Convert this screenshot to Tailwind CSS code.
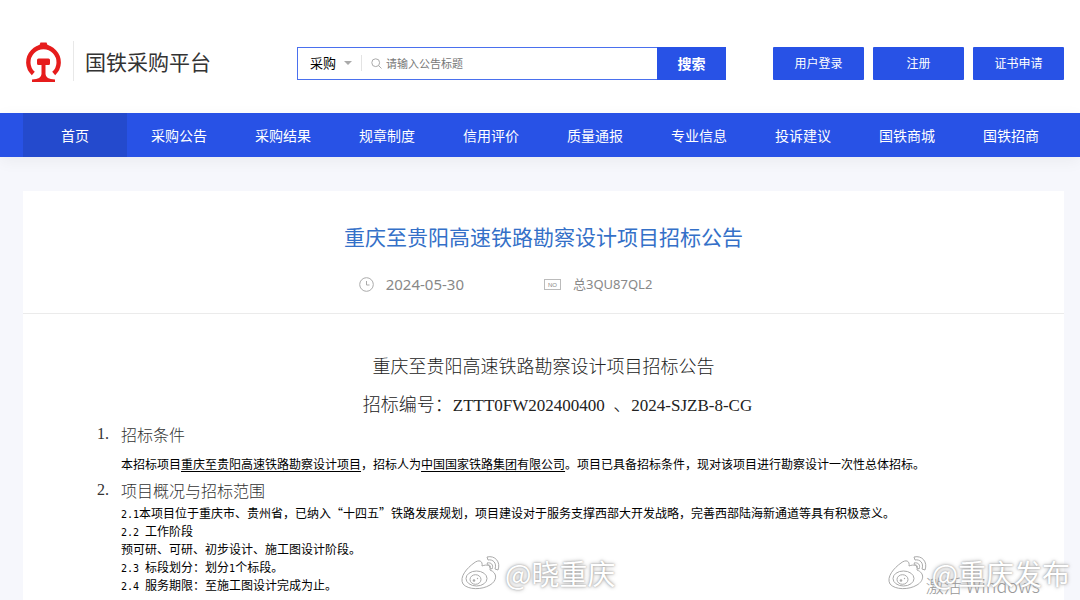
<!DOCTYPE html>
<html lang="zh-CN">
<head>
<meta charset="utf-8">
<meta name="viewport" content="width=device-width, initial-scale=1">
<title>国铁采购平台</title>
<script src="https://cdn.jsdelivr.net/npm/@tailwindcss/browser@4"></script>
</head>
<body class="relative flex min-h-screen flex-col overflow-x-hidden bg-[#f6f7fc] font-['Noto_Sans_CJK_SC',sans-serif] text-black">
  <header class="flex items-center bg-white pt-[37px] pr-4 pb-7 pl-6">
    <a href="#" class="flex items-center">
      <svg class="h-12 w-10" viewBox="0 0 40 48" aria-hidden="true">
        <path d="M9.300 36.500A15.200 15.200 0 1 1 29.700 36.500" fill="none" stroke="#e61c1c" stroke-width="4.400"/>
        <path d="M13.500 9q2.500-.5 3-3.500h6q.5 3 3 3.500z" fill="#e61c1c"/>
        <path d="M14.500 21.500h10q1.500 0 1.500 1.500v3.500q0 1.500-1.500 1.500h-3v9q0 5 9.500 5.500v2.500H8v-2.500q9.500-.5 9.500-5.500v-9h-3q-1.500 0-1.500-1.500v-3.500q0-1.500 1.500-1.500z" fill="#e61c1c"/>
      </svg>
      <span class="ml-[9px] h-10 w-px bg-[#e8e8e8]"></span>
      <span class="ml-[11px] text-[21px] leading-8 text-[#333]">国铁采购平台</span>
    </a>
    <form class="mt-1 mr-[47px] ml-[86px] flex h-[33px] flex-1">
      <div class="flex flex-1 items-center border border-r-0 border-[#4a70ee] bg-white">
        <div class="relative ml-3 flex items-center">
          <select aria-label="类型" class="w-[42px] appearance-none bg-transparent text-[13px] leading-5 outline-none"><option>采购</option></select>
          <svg class="pointer-events-none absolute right-0 h-1 w-2" viewBox="0 0 8 4" aria-hidden="true"><path d="M0 0h8L4 4z" fill="#aaa"/></svg>
        </div>
        <span class="ml-[9px] h-4 w-px bg-[#e3e3e3]"></span>
        <svg class="ml-[9px] size-[11px]" viewBox="0 0 11 11" fill="none" stroke="#aaa" aria-hidden="true"><circle cx="4.700" cy="4.700" r="3.900"/><path d="M7.500 7.500l3 3"/></svg>
        <input type="text" aria-label="公告标题" placeholder="请输入公告标题" class="ml-1 min-w-0 flex-1 text-[11px] leading-5 outline-none placeholder:text-[#777]">
      </div>
      <button type="submit" class="w-[69px] bg-[#2852e6] text-sm font-bold text-white">搜索</button>
    </form>
    <div class="mt-1 flex gap-[9px] text-xs text-white">
      <button type="button" class="h-[33px] w-[91px] rounded-[1px] bg-[#2852e6]">用户登录</button>
      <button type="button" class="h-[33px] w-[91px] rounded-[1px] bg-[#2852e6]">注册</button>
      <button type="button" class="h-[33px] w-[91px] rounded-[1px] bg-[#2852e6]">证书申请</button>
    </div>
  </header>

  <nav class="bg-[#2852e6] pr-[17px] pl-[23px] shadow-[0_4px_16px_rgba(0,0,0,0.05)]">
    <ul class="grid grid-cols-10 text-center text-sm leading-[44px] text-white">
      <li><a href="#" class="block bg-[#244acd]">首页</a></li>
      <li><a href="#" class="block">采购公告</a></li>
      <li><a href="#" class="block">采购结果</a></li>
      <li><a href="#" class="block">规章制度</a></li>
      <li><a href="#" class="block">信用评价</a></li>
      <li><a href="#" class="block">质量通报</a></li>
      <li><a href="#" class="block">专业信息</a></li>
      <li><a href="#" class="block">投诉建议</a></li>
      <li><a href="#" class="block">国铁商城</a></li>
      <li><a href="#" class="block">国铁招商</a></li>
    </ul>
  </nav>

  <main class="mt-[34px] mr-4 ml-[23px] flex-1 bg-white">
    <div class="border-b border-[#ebebeb] pt-[29px] pb-[17px]">
      <h1 class="text-center text-[21px] leading-8 text-[#3470c8]">重庆至贵阳高速铁路勘察设计项目招标公告</h1>
      <div class="mt-5 flex justify-center gap-20 pr-[76px] text-[#888]">
        <span class="flex items-center">
          <svg class="mr-3 size-[15px]" viewBox="0 0 15 15" fill="none" stroke="#aaa" aria-hidden="true"><circle cx="7.500" cy="7.500" r="6.800"/><path d="M7.500 4v4h3"/></svg>
          <time class="font-['Noto_Sans',sans-serif] text-[15px] leading-6">2024-05-30</time>
        </span>
        <span class="flex items-center">
          <span class="mr-3 border border-[#bbb] px-[3px] pt-px font-['Liberation_Sans',sans-serif] text-[6px] leading-[8px]">NO</span>
          <span class="font-['Noto_Sans','Noto_Sans_CJK_SC',sans-serif] text-[13px] leading-6">总3QU87QL2</span>
        </span>
      </div>
    </div>

    <article class="pt-8 pr-10 pb-1 pl-[98px]">
      <div class="pr-[58px] text-center text-lg leading-[38px] font-light text-[#222]">
        <h2>重庆至贵阳高速铁路勘察设计项目招标公告</h2>
        <p class="pl-7 whitespace-nowrap">招标编号：<span class="font-['Liberation_Serif',serif] text-[17px] leading-none">ZTTT0FW202400400&nbsp; </span>、<span class="font-['Liberation_Serif',serif] text-[17px] leading-none">2024-SJZB-8-CG</span></p>
      </div>
      <h3 class="-ml-6 flex text-base leading-6 font-light text-[#333]"><span class="w-6 font-['Liberation_Serif',serif]">1.</span>招标条件</h3>
      <p class="pt-[9px] pb-[5px] text-xs leading-[18px]">本招标项目<u class="underline-offset-2">重庆至贵阳高速铁路勘察设计项目</u>，招标人为<u class="underline-offset-2">中国国家铁路集团有限公司</u>。项目已具备招标条件，现对该项目进行勘察设计一次性总体招标。</p>
      <h3 class="-ml-6 flex text-base leading-6 font-light text-[#333]"><span class="w-6 font-['Liberation_Serif',serif]">2.</span>项目概况与招标范围</h3>
      <div class="pt-[2px] text-xs leading-[18px]">
        <p><span class="font-['DejaVu_Sans_Mono',monospace] text-[10px] leading-none">2.1</span>本项目位于重庆市、贵州省，已纳入“十四五”铁路发展规划，项目建设对于服务支撑西部大开发战略，完善西部陆海新通道等具有积极意义。</p>
        <p><span class="font-['DejaVu_Sans_Mono',monospace] text-[10px] leading-none">2.2 </span>工作阶段</p>
        <p>预可研、可研、初步设计、施工图设计阶段。</p>
        <p><span class="font-['DejaVu_Sans_Mono',monospace] text-[10px] leading-none">2.3 </span>标段划分：划分<span class="font-['DejaVu_Sans_Mono',monospace] text-[10px] leading-none">1</span>个标段。</p>
        <p><span class="font-['DejaVu_Sans_Mono',monospace] text-[10px] leading-none">2.4 </span>服务期限：至施工图设计完成为止。</p>
      </div>
    </article>
  </main>

  <svg class="hidden" aria-hidden="true">
    <symbol id="weibo" viewBox="0 0 40 36">
      <g fill="#fff" stroke="#aaa" stroke-width="1" stroke-linejoin="round">
        <path d="M13 8c5-4 9-2 8 3 5-2 9-1 8 4 8 3 7 11 0 15-8 5-22 5-27-1C-2 22 6 13 13 8z"/>
        <ellipse cx="15.500" cy="23.500" rx="10.500" ry="7.500"/>
        <ellipse cx="14.500" cy="24.500" rx="5.500" ry="4.800"/>
        <path d="M26 2c8-2 14 5 11 13l-3-1c2-6-2-10-7-9z"/>
        <path d="M26 8c4-1 7 2 5 6l-2-1c1-2 0-3-2-3z"/>
      </g>
      <circle cx="13" cy="25.500" r="1.300" fill="#aaa"/>
      <circle cx="16.500" cy="23.500" r=".7" fill="#aaa"/>
    </symbol>
  </svg>
  <span class="absolute right-10 bottom-[3px] text-lg leading-6 font-light text-[#999]">激活 Windows</span>
  <div class="absolute bottom-[7px] left-[461px] flex items-center gap-1 text-[28px] leading-10 text-white [text-shadow:0_0_2px_#999,0_0_4px_#aaa]">
    <svg class="h-9 w-10" aria-hidden="true"><use href="#weibo"/></svg>@晓重庆
  </div>
  <div class="absolute right-[10px] bottom-[7px] flex items-center gap-1 text-[28px] leading-10 text-white [text-shadow:0_0_2px_#999,0_0_4px_#aaa]">
    <svg class="h-9 w-10" aria-hidden="true"><use href="#weibo"/></svg>@重庆发布
  </div>
</body>
</html>
